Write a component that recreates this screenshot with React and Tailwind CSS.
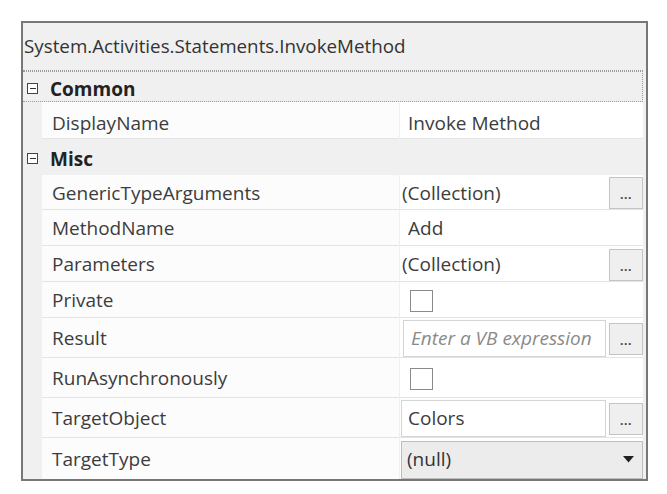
import React from "react";

const font = { fontFamily: '"Open Sans", "Noto Sans", sans-serif' };

function Expander() {
  return (
    <span className="w-[11px] h-[11px] border border-[#444] flex items-center justify-center bg-white">
      <span className="w-[6px] h-px bg-[#333]"></span>
    </span>
  );
}

function Ellipsis() {
  return (
    <div className="w-[34px] h-[32px] shrink-0 border border-[#c4c4c4] bg-[#efefef] flex items-end justify-center pb-[7px]">
      <span className="text-[12px] font-bold leading-none text-[#444] tracking-[0.5px]">...</span>
    </div>
  );
}

function CheckBox() {
  return <div className="ml-[10px] w-[23px] h-[22px] border border-[#8a8a8a] bg-white"></div>;
}

function Category({ name, h, dotted }) {
  return (
    <div
      className={`flex items-center gap-[12px] pl-[4px] ${h} ${
        dotted ? "border-y border-r border-dotted border-[#9a9a9a] mr-[3px]" : ""
      }`}
    >
      <span className="pt-[3px]">
        <Expander />
      </span>
      <span className="text-[19px] font-bold text-[#222] pt-[5px]">{name}</span>
    </div>
  );
}

function Row({ label, h, children, last, pt = "pt-[2px]" }) {
  return (
    <div className={`flex ${h}`}>
      <div className="w-[19px] shrink-0"></div>
      <div
        className={`w-[357px] shrink-0 bg-[#fcfcfc] flex items-center pl-[10px] ${pt} text-[19px] text-[#3c3c3c] ${
          last ? "" : "border-b border-[#e4e4e4]"
        }`}
      >
        {label}
      </div>
      <div
        className={`flex-1 mr-[3px] ml-[1px] bg-white flex items-center ${pt} ${
          last ? "" : "border-b border-[#e4e4e4]"
        }`}
      >
        {children}
      </div>
    </div>
  );
}

export default function App() {
  return (
    <div className="w-[667px] h-[494px] bg-white pt-[21px] pl-[21px]" style={font}>
      <div className="w-[627px] h-[460px] border-2 border-[#777] bg-[#f0f0f0] flex flex-col">
        {/* type name header */}
        <div className="h-[48px] flex items-center pl-px border-b border-dotted border-[#9a9a9a] mr-[3px]">
          <span className="text-[18.8px] text-[#333]">System.Activities.Statements.InvokeMethod</span>
        </div>

        <Category name="Common" h="h-[31px]" dotted />

        <Row label="DisplayName" h="h-[37px]" pt="pt-[7px]">
          <span className="pl-[8px] text-[19px] text-[#3c3c3c]">Invoke Method</span>
        </Row>

        <Category name="Misc" h="h-[36px]" />

        <Row label="GenericTypeArguments" h="h-[35px]">
          <span className="flex-1 pl-[2px] text-[19px] text-[#3c3c3c]">(Collection)</span>
          <Ellipsis />
        </Row>
        <Row label="MethodName" h="h-[36px]">
          <span className="pl-[8px] text-[19px] text-[#3c3c3c]">Add</span>
        </Row>
        <Row label="Parameters" h="h-[36px]">
          <span className="flex-1 pl-[2px] text-[19px] text-[#3c3c3c]">(Collection)</span>
          <Ellipsis />
        </Row>
        <Row label="Private" h="h-[36px]">
          <CheckBox />
        </Row>
        <Row label="Result" h="h-[40px]">
          <div className="ml-[3px] mr-[3px] flex-1 h-[37px] border border-[#d4d4d4] flex items-center pl-[7px] overflow-hidden">
            <span className="text-[19px] italic text-[#8a8a8a] whitespace-nowrap">Enter a VB expression</span>
          </div>
          <Ellipsis />
        </Row>
        <Row label="RunAsynchronously" h="h-[40px]">
          <CheckBox />
        </Row>
        <Row label="TargetObject" h="h-[40px]">
          <div className="ml-[1px] mr-[3px] flex-1 h-[37px] border border-[#d4d4d4] flex items-center pl-[6px]">
            <span className="text-[19px] text-[#3c3c3c]">Colors</span>
          </div>
          <Ellipsis />
        </Row>
        <Row label="TargetType" h="h-[41px]" last>
          <div className="ml-[1px] flex-1 h-[38px] border border-[#bdbdbd] bg-[#ececec] flex items-center justify-between pl-[5px] pr-[8px]">
            <span className="text-[19px] text-[#333]">(null)</span>
            <svg width="11" height="7" viewBox="0 0 11 7">
              <path d="M0 0 L11 0 L5.5 6.5 Z" fill="#222" />
            </svg>
          </div>
        </Row>
      </div>
    </div>
  );
}
